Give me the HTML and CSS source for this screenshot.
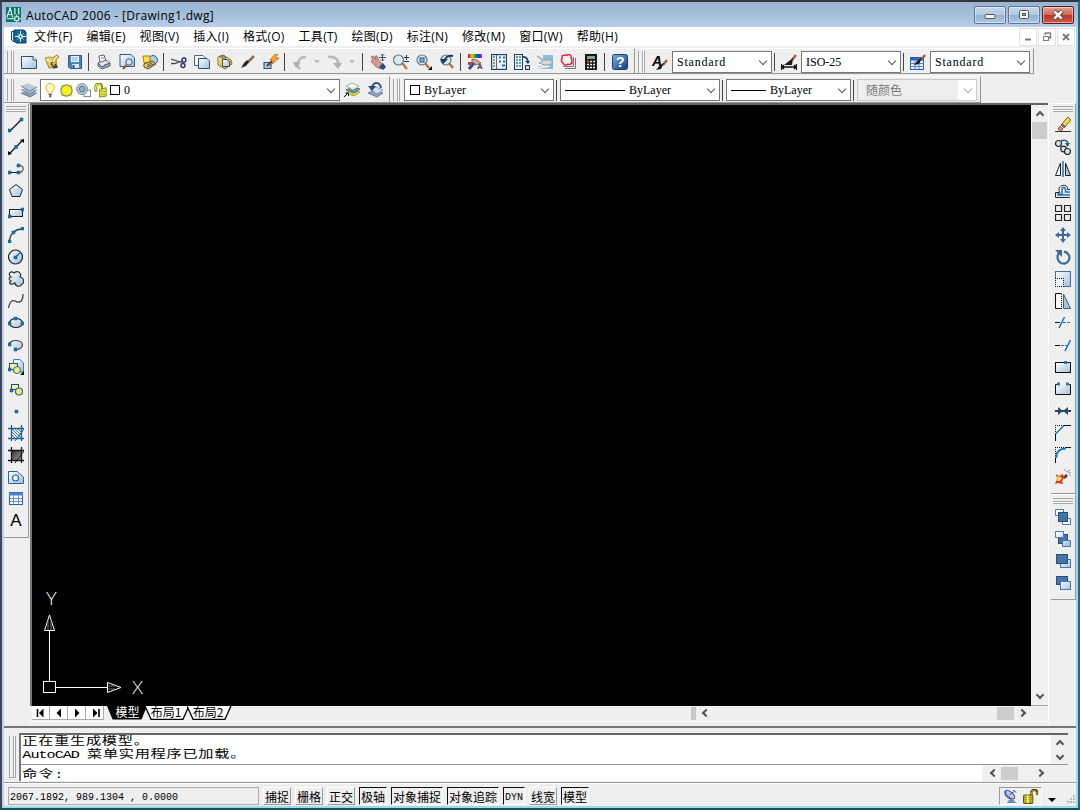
FILE: index.html
```html
<!DOCTYPE html>
<html lang="zh-CN">

<head>
    <meta charset="UTF-8">
    <meta name="viewport" content="width=device-width, initial-scale=1.0">
    <title>AutoCAD 2006 - [Drawing1.dwg]</title>
    <link rel="stylesheet" href="styles.css">
</head>

<body>
    <!-- shared gradients -->
    <svg class="defs" width="0" height="0">
        <defs>
            <linearGradient id="g-paper" x1="0" y1="0" x2="1" y2="1"><stop offset="0" stop-color="#fff"/><stop offset="1" stop-color="#9fc0dd"/></linearGradient>
            <linearGradient id="g-blue" x1="0" y1="0" x2="1" y2="1"><stop offset="0" stop-color="#7fb0dc"/><stop offset="1" stop-color="#123f7c"/></linearGradient>
            <linearGradient id="g-gold" x1="0" y1="0" x2="1" y2="1"><stop offset="0" stop-color="#fff3a0"/><stop offset="1" stop-color="#c99512"/></linearGradient>
            <linearGradient id="g-dark" x1="0" y1="0" x2="1" y2="1"><stop offset="0" stop-color="#22264c"/><stop offset="1" stop-color="#b0ad70"/></linearGradient>
            <linearGradient id="g-rainbow"><stop offset="0" stop-color="#e00030"/><stop offset=".3" stop-color="#e8d000"/><stop offset=".5" stop-color="#10b030"/><stop offset=".75" stop-color="#1040e0"/><stop offset="1" stop-color="#e010d0"/></linearGradient>
        </defs>
    </svg>

    <div class="window">
        <div class="titlebar">
            <svg class="app-icon" viewBox="0 0 16 16"><rect width="16" height="16" fill="#0d7468"/><path d="M1 11L4.500 1L7 11M9.500 1V8M13.500 1V8M2.500 8H6" fill="none" stroke="#d5f3ec" stroke-width="1.300"/><path d="M1 12.500H16M11.500 8V16" stroke="#fff"/><rect x="9.500" y="10.500" width="4" height="4" fill="#0d7468" stroke="#fff"/></svg>
            <span class="title">AutoCAD 2006 - [Drawing1.dwg]</span>
            <div class="win-btn"><svg width="14" height="12" viewBox="0 0 14 12"><rect x="2" y="5.500" width="10" height="4" rx="1" fill="#f5f5f5" stroke="#51565f"/></svg></div>
            <div class="win-btn"><svg width="14" height="12" viewBox="0 0 14 12"><rect x="2.500" y="1.500" width="9" height="8" rx="1" fill="#f5f5f5" stroke="#51565f"/><rect x="5.500" y="4.500" width="3" height="2" fill="#8fa9c6" stroke="#51565f"/></svg></div>
            <div class="win-btn close"><svg width="14" height="12" viewBox="0 0 14 12"><path d="M3 2L11 10M11 2L3 10" stroke="#5a4248" stroke-width="4.200"/><path d="M3.300 2.300L10.700 9.700M10.700 2.300L3.300 9.700" stroke="#fff" stroke-width="2.400"/></svg></div>
        </div>

        <div class="menubar">
            <svg class="menu-icon" viewBox="0 0 16 16"><path d="M.5 2.500H3V12.500H2L.5 11Z" fill="#d7e8f4" stroke="#174f7c"/><path d="M3 1H13L15 3V14H5L3 12Z" fill="#10639d" stroke="#0b3f68"/><path d="M9.500 2V13M4 7.500H15" stroke="#fff"/><path d="M6 4L13 11M13 4L6 11" stroke="#8cc4e8" stroke-width=".6"/><rect x="8" y="6" width="3" height="3" fill="#10639d" stroke="#fff"/></svg>
            <span class="menu">文件(F)</span>
            <span class="menu">编辑(E)</span>
            <span class="menu">视图(V)</span>
            <span class="menu">插入(I)</span>
            <span class="menu">格式(O)</span>
            <span class="menu">工具(T)</span>
            <span class="menu">绘图(D)</span>
            <span class="menu">标注(N)</span>
            <span class="menu">修改(M)</span>
            <span class="menu">窗口(W)</span>
            <span class="menu">帮助(H)</span>
            <div class="doc-btns">
                <div class="doc-btn"><svg width="10" height="10" viewBox="0 0 10 10"><path d="M2 7.500H8" stroke="#777d86" stroke-width="2"/></svg></div>
                <div class="doc-btn"><svg width="10" height="10" viewBox="0 0 10 10"><path d="M3 1H9M3 1V3M8.500 1V6H7" fill="none" stroke="#777d86" stroke-width="1.500"/><rect x="1.500" y="4.500" width="5" height="4" fill="none" stroke="#777d86"/></svg></div>
                <div class="doc-btn"><svg width="10" height="10" viewBox="0 0 10 10"><path d="M2 2L8 8M8 2L2 8" stroke="#777d86" stroke-width="2"/></svg></div>
            </div>
        </div>

        <div class="toolrow">
            <div class="toolbar">
                <i class="grip"></i>
                <div class="btn"><svg viewBox="0 0 16 16"><path d="M.5 2.500H12L15.500 6V14.500H.5Z" fill="url(#g-paper)" stroke="#24527c"/><path d="M12 2.500V6H15.500" fill="#fff" stroke="#24527c"/></svg></div>
                <div class="btn"><svg viewBox="0 0 16 16"><path d="M1 4L6 3L8 4L13 1L15 3L12 6L13 13L5 14Z" fill="url(#g-gold)" stroke="#a8882e"/><path d="M3 6L9 8L13 2" fill="none" stroke="#fffbd0"/><path d="M9 8C6 9 7 12 12 13M9 14L13 13L11 10" fill="none" stroke="#2f3f4a" stroke-width="1.300"/></svg></div>
                <div class="btn"><svg viewBox="0 0 16 16"><path d="M1.500 1.500H14.500V14.500H3L1.500 13Z" fill="#4a83bd" stroke="#2c5c96"/><path d="M4 2H12V8H4Z" fill="#e8f2fa"/><path d="M5 4H11M5 6H11" stroke="#8aaacd"/><path d="M5 10H12V14H5Z" fill="#dfe8f0"/><path d="M6.500 11V14" stroke="#204c87" stroke-width="2"/></svg></div>
                <i class="sep"></i>
                <div class="btn"><svg viewBox="0 0 16 16"><path d="M4 8L3 2L8 1L10 7" fill="#fff" stroke="#5c5c7c"/><path d="M2 9L10 6L14 9L6 13Z" fill="#e3e5ee" stroke="#5c5c7c"/><path d="M2 9V12L6 15L14 12V9L6 13Z" fill="#a3abc3" stroke="#5c5c7c"/><path d="M5 4H8M8 11L12 10" stroke="#777"/></svg></div>
                <div class="btn"><svg viewBox="0 0 16 16"><path d="M1 .5H12L15.500 4V12.500H1Z" fill="url(#g-paper)" stroke="#2e5d88"/><circle cx="10" cy="8" r="3.200" fill="#cfe6f7" stroke="#44586e"/><path d="M7.500 11L4 15" stroke="#9a5531" stroke-width="2"/></svg></div>
                <div class="btn"><svg viewBox="0 0 16 16"><circle cx="11" cy="6" r="4.500" fill="#a8cbe8" stroke="#395f88"/><path d="M1 2H8V8L2 9Z" fill="#ffe03c" stroke="#a78010"/><path d="M2 10L10 7L14 10L6 15L2 13Z" fill="url(#g-gold)" stroke="#5a4c20"/><path d="M5 11L10 9M5 13L12 10" stroke="#4b5164"/></svg></div>
                <i class="sep"></i>
                <div class="btn"><svg viewBox="0 0 16 16"><path d="M0 5L11 8.500M0 9.500H4L11 7" fill="none" stroke="#444c56" stroke-width="1.300"/><circle cx="13" cy="6" r="2" fill="none" stroke="#2b2f70" stroke-width="1.400"/><circle cx="12" cy="11.500" r="2" fill="none" stroke="#2b2f70" stroke-width="1.400"/></svg></div>
                <div class="btn"><svg viewBox="0 0 16 16"><path d="M.5 1.500H9L11.500 4V11.500H.5Z" fill="#fff" stroke="#3a6a96"/><path d="M4.500 4.500H13L15.500 7V14.500H4.500Z" fill="url(#g-paper)" stroke="#24527c"/></svg></div>
                <div class="btn"><svg viewBox="0 0 16 16"><path d="M1 3L6 1L14 6L15 10L8 15L1 11Z" fill="url(#g-gold)" stroke="#94700e"/><path d="M3 2H8L9 4H4Z" fill="#bbb" stroke="#666"/><path d="M5.500 5.500H10L12.500 8V12.500H5.500Z" fill="url(#g-paper)" stroke="#24527c"/></svg></div>
                <div class="btn"><svg viewBox="0 0 16 16"><path d="M14 2L7 9" stroke="#9b6b45" stroke-width="2.500"/><path d="M9 8L6 12L1 14L4 9L7 6Z" fill="#2b2725"/></svg></div>
                <div class="btn"><svg viewBox="0 0 16 16"><rect x="1" y="8.500" width="7" height="6" fill="#a9cbe7" stroke="#20507c"/><path d="M4 12L9 7" stroke="#6b3a20" stroke-width="2"/><path d="M12 0L7 6H11L8 11L16 4H12L15 0Z" fill="#f7b51b" stroke="#b9601a" stroke-width=".8"/></svg></div>
                <i class="sep"></i>
                <div class="btn"><svg viewBox="0 0 16 16"><path d="M8 15C3 11 6 3 14 3" fill="none" stroke="#b9b9b9" stroke-width="2.600"/><path d="M1 8H9L4 14Z" fill="#b0b0b0"/></svg></div>
                <i class="drop"></i>
                <div class="btn"><svg viewBox="0 0 16 16"><path d="M1 3C9 2 12 6 11 12" fill="none" stroke="#b9b9b9" stroke-width="2.600"/><path d="M6 9H15L11 15Z" fill="#b0b0b0"/></svg></div>
                <i class="drop"></i>
                <i class="sep wide"></i>
                <div class="btn"><svg viewBox="0 0 16 16"><path d="M1 7L3 6L1 3L3 2L6 6L5 2L7 2L9 7L12 9L13 12L10 15L5 12Z" fill="#d99a94" stroke="#9d6060" stroke-width=".8"/><path d="M9 13L13 9L16 13L13 16Z" fill="#284b80"/><path d="M12.500 0V7M9 3.500H16M11 1.500L12.500 0L14 1.500M11 5.500L12.500 7L14 5.500" fill="none" stroke="#245a80"/></svg></div>
                <div class="btn"><svg viewBox="0 0 16 16"><circle cx="5.500" cy="6" r="5" fill="#dbeaf5" stroke="#65788b" stroke-width="1.200"/><path d="M9 9L14 15" stroke="#b37b43" stroke-width="2.600"/><path d="M11 3.500H16M13.500 1V6M11 7.500H16" stroke="#173d6c"/></svg></div>
                <div class="btn"><svg viewBox="0 0 16 16"><circle cx="6" cy="6" r="5" fill="#dbeaf5" stroke="#65788b" stroke-width="1.200"/><rect x="4" y="4" width="4" height="4" fill="#85b4d7" stroke="#24527c"/><path d="M9 9L13 14" stroke="#b37b43" stroke-width="2.600"/><path d="M16 12V16H12Z"/></svg></div>
                <div class="btn"><svg viewBox="0 0 16 16"><circle cx="7" cy="6" r="5" fill="#dbeaf5" stroke="#65788b" stroke-width="1.200"/><path d="M10 9L14 14" stroke="#b37b43" stroke-width="2.600"/><path d="M14 2C9 1 6 4 5 7" fill="none" stroke="#17396b" stroke-width="2"/><path d="M1 5H9L4 10Z" fill="#17396b"/></svg></div>
                <i class="sep"></i>
                <div class="btn"><svg viewBox="0 0 16 16"><rect width="14" height="4" fill="url(#g-rainbow)"/><path d="M4 5L9 6L13 9L8 11L4 9Z" fill="#dba69b" stroke="#68423e" stroke-width=".7"/><path d="M1 15L6 9" stroke="#2354a0" stroke-width="3"/><text x="9" y="15" class="tiny">A</text><rect y="8" width="4" height="3" fill="#cf3e34"/></svg></div>
                <div class="btn"><svg viewBox="0 0 16 16"><rect x=".5" y=".5" width="15" height="15" fill="#eaf3fb" stroke="#163f70" stroke-width="1.300"/><path d="M5.500 1V15" stroke="#426f9b"/><path d="M3 2V14" stroke="#a19a48" stroke-width="2" stroke-dasharray="2 1"/><path d="M8 3.500H10M12 3.500H14M8 7.500H10M12 7.500H14M11 11.500H14" stroke="#41698f" stroke-width="2"/></svg></div>
                <div class="btn"><svg viewBox="0 0 16 16"><rect x=".5" y=".5" width="8" height="15" fill="#eaf3fb" stroke="#163f70"/><path d="M2 3H7M2 6H7M2 9H7M2 12H7" stroke="#426f9b" stroke-width="1.500" stroke-dasharray="2 1"/><path d="M8 3C12 2 14 5 14 9" fill="none" stroke="#163f70" stroke-width="1.700"/><path d="M11 7H16L14 10Z" fill="#163f70"/><rect x="11.500" y="11.500" width="4" height="4" fill="#e6dc90" stroke="#163f70"/></svg></div>
                <div class="btn"><svg viewBox="0 0 16 16"><path d="M6 1H16V15H1V12H6Z" fill="#8dbbd8"/><path d="M0 2L7 6H15V10L8 11L2 9L6 7Z" fill="#d5d9dc" stroke="#8b989f" stroke-width=".8"/><path d="M1 14L12 12" stroke="#e9edf0" stroke-width="2"/></svg></div>
                <div class="btn"><svg viewBox="0 0 16 16"><path d="M5 14.500H15.500V4M3 12.500H13.500V3" fill="none" stroke="#70767c"/><path d="M2 2C4 0 5 2 7 1C9 0 12 1 11 4C13 6 11 7 12 9C10 12 8 9 6 11C3 12 4 9 2 8C0 6 3 5 2 2Z" fill="#fff2f2" stroke="#e1182b" stroke-width="1.400"/></svg></div>
                <div class="btn"><svg viewBox="0 0 16 16"><rect x="2" width="12" height="16" fill="#19191b"/><rect x="4" y="2" width="8" height="3" fill="#84a784"/><path d="M4 7.500H12M4 10.500H12M4 13.500H12" stroke="#f2f2f2" stroke-width="1.600" stroke-dasharray="2 1"/><path d="M4 7.500H6" stroke="#e03030" stroke-width="2"/></svg></div>
                <i class="sep"></i>
                <div class="btn"><svg viewBox="0 0 16 16"><rect x=".5" y=".5" width="15" height="15" rx="2" fill="url(#g-blue)" stroke="#123f7c"/><text x="4" y="13" class="help">?</text></svg></div>
            </div>
            <div class="toolbar styles">
                <i class="grip"></i>
                <div class="btn style-btn"><svg viewBox="0 0 16 16"><text x="0" y="12" class="slant">A</text><path d="M15 6L11 11" stroke="#a76335" stroke-width="2.500"/><path d="M12 9L9 15L4 16L8 11Z" fill="#1b1b1b"/></svg></div>
                <div class="combo w100 spaced">Standard<i class="chev"></i></div>
                <i class="sep style-sep"></i>
                <div class="btn style-btn"><svg viewBox="0 0 16 16"><path d="M.5 10V16M15.500 10V16M1 13H15M3 11L1 13L3 15M13 11L15 13L13 15" fill="none" stroke="#111" stroke-width="1.300"/><path d="M15 1L11 6" stroke="#a76335" stroke-width="2.500"/><path d="M12 4L11 11L3 11L8 7Z" fill="#1b1b1b"/></svg></div>
                <div class="combo w100">ISO-25<i class="chev"></i></div>
                <i class="sep style-sep"></i>
                <div class="btn style-btn"><svg viewBox="0 0 16 16"><rect x=".5" y="3.500" width="13" height="12" fill="#e4f0ff" stroke="#2c5eaf"/><path d="M0 5H14" stroke="#2c5eaf" stroke-width="3"/><path d="M5 4V15M9 4V15M0 9.500H14M0 12.500H14" stroke="#4d83cf"/><path d="M15 1L11 6" stroke="#a76335" stroke-width="2.500"/><path d="M12 4L9 10L4 11L8 6Z" fill="#1b1b1b"/></svg></div>
                <div class="combo w100 spaced">Standard<i class="chev"></i></div>
            </div>
        </div>

        <div class="toolrow second">
            <div class="toolbar">
                <i class="grip"></i>
                <div class="btn"><svg viewBox="0 0 16 16"><path d="M0 11L7 8L16 11L9 15Z" fill="#8c9fb3"/><path d="M0 7.500L7 4.500L16 8L9 12Z" fill="#a3b6c8" stroke="#eef2f5" stroke-width=".6"/><path d="M0 4L7 1L16 5L9 9Z" fill="#b9c8d6" stroke="#eef2f5" stroke-width=".6"/><path d="M0 4L9 9L16 5M0 7.500L9 12L16 8M0 11L9 15L16 11" fill="none" stroke="#536c85" stroke-width=".8"/></svg></div>
                <div class="combo layer">
                    <svg viewBox="0 0 16 16"><path d="M6 11C6 9 3 8 3 5C3 -1 12 -1 12 5C12 8 9 9 9 11Z" fill="#fffbb5" stroke="#c4ae3c"/><path d="M6 12.500H9.500M6.500 14.500H9" stroke="#4f5f82" stroke-width="1.600"/></svg>
                    <svg viewBox="0 0 16 16"><path d="M2 2L14 14M14 2L2 14" stroke="#d8cf40" stroke-width="1.500"/><circle cx="8" cy="8" r="6" fill="#f7ef27" stroke="#7f8b4c" stroke-width="1.200"/></svg>
                    <svg viewBox="0 0 16 16"><rect x="8.500" y="7.500" width="7" height="7" fill="#fff" stroke="#66819b"/><circle cx="6.500" cy="6.500" r="5.800" fill="#b6c6d5" stroke="#73899e"/><circle cx="6.500" cy="6.500" r="3" fill="#92adc6" stroke="#587590"/></svg>
                    <svg viewBox="0 0 16 16"><path d="M3 9V4C3 0 9 0 9 4V8" fill="none" stroke="#8b8d20" stroke-width="3.300"/><path d="M3 8V4C3 1 8 1 8 4V7" fill="none" stroke="#f0ed4a" stroke-width="1.500"/><path d="M7 7L14 5V14L7 15Z" fill="#e4ea3c" stroke="#83861f"/><path d="M8 9H13M8 12H13" stroke="#a4a81f"/></svg>
                    <i class="swatch"></i>
                    <span>0</span><i class="chev"></i>
                </div>
                <div class="btn"><svg viewBox="0 0 16 16"><path d="M2 11L8 8L16 10L10 14Z" fill="#e2d63e" stroke="#8c851c" stroke-width=".7"/><path d="M2 8L8 5L16 7L10 11Z" fill="#5f91b6" stroke="#2e5979" stroke-width=".7"/><path d="M2 4L8 1L15 4L9 8Z" fill="#f5f6e8" stroke="#9b9c68" stroke-width=".7"/><path d="M0 15L4 11M1.500 11H4.500V14" fill="none" stroke="#111"/></svg></div>
                <div class="btn"><svg viewBox="0 0 16 16"><path d="M1 11L7 8L16 11L10 15Z" fill="#8ea6bd" stroke="#3f5e7b" stroke-width=".7"/><path d="M3 7L9 5L16 8L10 12Z" fill="#d5dee6" stroke="#64819c" stroke-width=".7"/><path d="M14 6C13 0 7 -1 5 5" fill="none" stroke="#315b8d" stroke-width="2"/><path d="M1 4H9L5 9Z" fill="#234a7c"/></svg></div>
            </div>
            <div class="toolbar props">
                <i class="grip"></i>
                <div class="combo w150"><i class="swatch"></i>ByLayer<i class="chev"></i></div>
                <i class="sep prop-sep"></i>
                <div class="combo w160"><i class="line long"></i>ByLayer<i class="chev"></i></div>
                <i class="sep prop-sep"></i>
                <div class="combo w125"><i class="line"></i>ByLayer<i class="chev"></i></div>
                <i class="sep prop-sep"></i>
                <div class="combo w120 disabled"><span>随颜色</span><i class="chev"></i></div>
            </div>
        </div>

        <div class="main">
            <div class="side left">
                <i class="hgrip"></i>
                <div class="tool"><svg viewBox="0 0 16 16"><path d="M2 14L14 2" stroke="#111" stroke-width="1.200"/><path class="node" d="M0 12H3V15H0ZM12 1H15V4H12Z"/></svg></div>
                <div class="tool"><svg viewBox="0 0 16 16"><path d="M1 15L15 1" stroke="#111" stroke-width="1.200"/><path d="M0 16V12L4 15ZM16 0V4L12 1Z"/><path class="node" d="M6.500 6.500H9.500V9.500H6.500Z"/></svg></div>
                <div class="tool"><svg viewBox="0 0 16 16"><path d="M1 11.500H11" stroke="#111"/><path d="M11 4.500C17 4 16 12 11 11.500" fill="none" stroke="#555" stroke-width="1.200"/><path class="node" d="M0 10H3V13H0ZM9 10H12V13H9ZM9 3H12V6H9Z"/></svg></div>
                <div class="tool"><svg viewBox="0 0 16 16"><path d="M8 1.500L14.500 6.500L12 13.500H4L1.500 6.500Z" fill="url(#g-paper)" stroke="#222"/></svg></div>
                <div class="tool"><svg viewBox="0 0 16 16"><rect x="1.500" y="4.500" width="13" height="7" fill="url(#g-paper)" stroke="#222"/><path class="node" d="M0 10H3V13H0ZM13 3H16V6H13Z"/></svg></div>
                <div class="tool"><svg viewBox="0 0 16 16"><path d="M1.500 14C2 6 8 2 14 2" fill="none" stroke="#444" stroke-width="1.300"/><path class="node" d="M0 13H3V16H0ZM4 4H7V7H4ZM13 0H16V3H13Z"/></svg></div>
                <div class="tool"><svg viewBox="0 0 16 16"><circle cx="7.500" cy="8" r="7" fill="url(#g-paper)" stroke="#222" stroke-width="1.200"/><path d="M7.500 8L12 4" stroke="#0c63a8" stroke-width="1.300"/><path class="node" d="M6 7H9V10H6Z"/></svg></div>
                <div class="tool"><svg viewBox="0 0 16 16"><path d="M3 6C-1 3 3 -1 6 2C10 -1 14 2 12 6C17 7 16 13 14 13C12 17 7 15 7 12C2 15 0 11 3 10C0 8 1 6 3 6Z" fill="url(#g-paper)" stroke="#333" stroke-width="1.200"/></svg></div>
                <div class="tool"><svg viewBox="0 0 16 16"><path d="M.5 15C2 7 5 7 7 8C12 11 15 8 15 1" fill="none" stroke="#333" stroke-width="1.200"/></svg></div>
                <div class="tool"><svg viewBox="0 0 16 16"><ellipse cx="8" cy="8" rx="6.500" ry="4.500" fill="url(#g-paper)" stroke="#222" stroke-width="1.200"/><path class="node" d="M0 7H3V10H0ZM13 7H16V10H13ZM6 2H9V5H6Z"/></svg></div>
                <div class="tool"><svg viewBox="0 0 16 16"><path d="M1.500 8C1 2 14 2 14.500 8C14 11 12 12.500 8 12.500" fill="url(#g-paper)" stroke="#444" stroke-width="1.200"/><path class="node" d="M0 6H3V9H0ZM6 11H9V14H6Z"/></svg></div>
                <div class="tool"><svg viewBox="0 0 16 16"><path d="M5.500 .5H12L15.500 4V13H5.500Z" fill="url(#g-paper)" stroke="#4a7ba8"/><rect x="1.500" y="4.500" width="8" height="6" fill="#f3f2a6" stroke="#155279"/><circle cx="9" cy="11" r="3.500" fill="#e8e994" stroke="#3a6c57"/><path class="node" d="M0 9H3V12H0Z"/><path d="M16 12V16H12Z"/></svg></div>
                <div class="tool"><svg viewBox="0 0 16 16"><rect x="3.500" y="3.500" width="7" height="5" fill="#f3f2a6" stroke="#155279"/><circle cx="11" cy="10.500" r="3.500" fill="#e8e994" stroke="#3a6c57" stroke-width="1.200"/><path class="node" d="M2 8H5V11H2Z"/></svg></div>
                <div class="tool"><svg viewBox="0 0 16 16"><path class="node" d="M7 7H10V10H7Z"/></svg></div>
                <div class="tool"><svg viewBox="0 0 16 16"><path d="M4 4L13 13M7 4L13 10M10 4L13 7M4 7L10 13M4 10L7 13" stroke="#526e84"/><path d="M3.500 0V16M13.500 0V16M0 3.500H16M0 13.500H16" stroke="#17639b" stroke-width="1.300"/><path d="M16 4L7 16" stroke="#17639b"/></svg></div>
                <div class="tool"><svg viewBox="0 0 16 16"><rect x="3" y="3" width="11" height="11" fill="url(#g-dark)"/><path d="M3.500 0V16M13.500 0V16M0 3.500H16M0 13.500H16" stroke="#161821" stroke-width="1.300"/><path d="M16 4L7 16" stroke="#161821"/></svg></div>
                <div class="tool"><svg viewBox="0 0 16 16"><path d="M.5 2.500H9L15.500 8V14.500H.5Z" fill="url(#g-paper)" stroke="#24659d"/><circle cx="7.500" cy="9" r="3" fill="#fff" stroke="#24659d" stroke-width="1.200"/></svg></div>
                <div class="tool"><svg viewBox="0 0 16 16"><rect x="1.500" y="1.500" width="13" height="12" fill="#f7fbff" stroke="#315ba4"/><path d="M1 3H15" stroke="#5080cd" stroke-width="3"/><path d="M5.500 4V13M10.500 4V13M2 7.500H14M2 10.500H14" stroke="#6a93cd"/></svg></div>
                <div class="tool mtext">A</div>
            </div>

            <div class="view">
                <div class="view-top">
                    <div class="canvas">
                        <svg width="120" height="120" viewBox="0 0 120 120">
                            <g fill="none" stroke="#fff">
                                <rect x="11.500" y="95.500" width="12" height="11"/>
                                <path d="M17.500 95V44M24 101.500H75"/>
                                <path d="M17.500 29L12.500 44.500H22.500ZM89 101.500L75.500 96.500V106.500Z"/>
                                <path d="M16 35V44M19 35V44M76 100H83M76 103H83" stroke="#777"/>
                            </g>
                            <text x="14" y="18.500" class="axis">Y</text>
                            <text x="100" y="108" class="axis">X</text>
                        </svg>
                    </div>
                    <div class="vscroll"><i class="arr up"></i><i class="thumb"></i><i class="arr down"></i></div>
                </div>
                <div class="tabs">
                    <div class="nav"><svg width="12" height="10" viewBox="0 0 12 10"><path d="M2.500 1V9" stroke="#000" stroke-width="1.600"/><path d="M8.500 .5V9.500L4 5Z"/></svg></div>
                    <div class="nav"><svg width="12" height="10" viewBox="0 0 12 10"><path d="M8 .5V9.500L3.500 5Z"/></svg></div>
                    <div class="nav"><svg width="12" height="10" viewBox="0 0 12 10"><path d="M4 .5V9.500L8.500 5Z"/></svg></div>
                    <div class="nav"><svg width="12" height="10" viewBox="0 0 12 10"><path d="M4 .5V9.500L8.500 5Z"/><path d="M10 1V9" stroke="#000" stroke-width="1.600"/></svg></div>
                    <div class="tab active"><svg viewBox="0 0 44 14" preserveAspectRatio="none"><path d="M0 0L6 13.500H37L43 0Z"/></svg><span>模型</span></div>
                    <div class="tab"><svg viewBox="0 0 44 14" preserveAspectRatio="none"><path d="M0 0L6 13.500H37L43 0" fill="#fff" stroke="#000" stroke-width="1.300"/></svg><span>布局1</span></div>
                    <div class="tab"><svg viewBox="0 0 44 14" preserveAspectRatio="none"><path d="M0 0L6 13.500H37L43 0" fill="#fff" stroke="#000" stroke-width="1.300"/></svg><span>布局2</span></div>
                    <div class="hscroll"><i class="split"></i><i class="arr lt"></i><i class="thumb"></i><i class="arr rt"></i></div>
                </div>
            </div>

            <div class="right">
                <div class="side">
                    <i class="hgrip"></i>
                    <div class="tool"><svg viewBox="0 0 16 16"><path d="M0 14.500H16" stroke="#333"/><path d="M13 0L16 3L9 11L6 8Z" fill="#f5d548" stroke="#5d4720" stroke-width=".8"/><path d="M5 9L8 12L6 14L3 12Z" fill="#df8e84" stroke="#783f39" stroke-width=".8"/><path d="M7 7L10 10" stroke="#557" stroke-width="1.500"/></svg></div>
                    <div class="tool"><svg viewBox="0 0 16 16"><circle cx="3.500" cy="4.500" r="3" fill="#d9e3eb" stroke="#222" stroke-width="1.200"/><circle cx="8.500" cy="10" r="2.800" fill="#d9e3eb" stroke="#222" stroke-width="1.200"/><circle cx="12.500" cy="12.500" r="3" fill="#d9e3eb" stroke="#222" stroke-width="1.200"/><path d="M6 2C10 0 13 2 13 5" fill="none" stroke="#175b91" stroke-width="1.500"/><path d="M10 4H15L12.500 8Z" fill="#175b91"/></svg></div>
                    <div class="tool"><svg viewBox="0 0 16 16"><path d="M5.500 2V14.500H.5Z" fill="#fff" stroke="#222"/><path d="M10.500 2V14.500H15.500Z" fill="#b7c5d2" stroke="#222"/><path d="M8 0V16" stroke="#1776bd" stroke-width="1.500"/></svg></div>
                    <div class="tool"><svg viewBox="0 0 16 16"><path d="M15 14.500H.5V9.500H4.500C1 1 14 0 12.500 6.500H15" fill="none" stroke="#222"/><path d="M15 12H3V11H7V6C7 4 10.500 4 10.500 6V9H15" fill="none" stroke="#1776bd" stroke-width="1.500"/></svg></div>
                    <div class="tool"><svg viewBox="0 0 16 16"><path d="M.5 .5H6.500V6.500H.5ZM9.500 .5H15.500V6.500H9.500ZM.5 9.500H6.500V15.500H.5ZM9.500 9.500H15.500V15.500H9.500Z" fill="#e9eef2" stroke="#222" stroke-width="1.200"/></svg></div>
                    <div class="tool"><svg viewBox="0 0 16 16"><path d="M8 2V14M2 8H14" stroke="#3b6b9d" stroke-width="2"/><path d="M8 0L11 4H5ZM8 16L11 12H5ZM0 8L4 5V11ZM16 8L12 5V11Z" fill="#3b6b9d"/></svg></div>
                    <div class="tool"><svg viewBox="0 0 16 16"><path d="M4 4C1 8 3 14 8 14.500C14 15 16 8 13 5C12 3 10 3 9 2.500" fill="none" stroke="#3b6b9d" stroke-width="2.200"/><path d="M0 1H7V8Z" fill="#3b6b9d"/></svg></div>
                    <div class="tool"><svg viewBox="0 0 16 16"><rect x=".5" y=".5" width="15" height="15" fill="url(#g-paper)" stroke="#416f99"/><rect y="7" width="9" height="9" fill="#eef3f8"/><path d="M0 7.500H9M8.500 7V16M.5 7V16M0 15.500H9" stroke="#111" stroke-dasharray="1 1"/></svg></div>
                    <div class="tool"><svg viewBox="0 0 16 16"><path d="M6.500 .5H.5V15.500H6.500" fill="#fff" stroke="#111"/><path d="M6.500 1V16" stroke="#111" stroke-dasharray="1 1"/><path d="M8.500 1L15.500 15.500H8.500Z" fill="#a9c3da" stroke="#385f86"/></svg></div>
                    <div class="tool"><svg viewBox="0 0 16 16"><path d="M0 7.500H5" stroke="#111"/><path d="M8 7.500H16" stroke="#1776bd" stroke-dasharray="3 1"/><path d="M9.500 2L4 13" stroke="#1776bd" stroke-width="1.500"/></svg></div>
                    <div class="tool"><svg viewBox="0 0 16 16"><path d="M0 8.500H5" stroke="#111"/><path d="M6 8.500H12" stroke="#1776bd" stroke-dasharray="3 1"/><path d="M15.500 3L10 14" stroke="#1776bd" stroke-width="1.500"/></svg></div>
                    <div class="tool"><svg viewBox="0 0 16 16"><rect x=".5" y="3.500" width="15" height="10" fill="url(#g-paper)" stroke="#111"/><path d="M9 2H12V5H9Z" fill="#40719e"/></svg></div>
                    <div class="tool"><svg viewBox="0 0 16 16"><path d="M3 3.500H.5V13.500H15.500V3.500H13" fill="url(#g-paper)" stroke="#111"/><path d="M2 1.500H5V4.500H2ZM11 1.500H14V4.500H11Z" fill="#40719e"/></svg></div>
                    <div class="tool"><svg viewBox="0 0 16 16"><path d="M0 8H16" stroke="#111" stroke-width="1.600"/><path d="M3 4L8 8L3 12ZM13 4L8 8L13 12Z" fill="#274c77"/></svg></div>
                    <div class="tool"><svg viewBox="0 0 16 16"><path d="M0 .5H9M.5 0V9" stroke="#111" stroke-dasharray="1 1"/><path d="M9 .5H16M.5 9V16" stroke="#111"/><path d="M.5 9L9 .5" stroke="#1776bd" stroke-width="1.400"/></svg></div>
                    <div class="tool"><svg viewBox="0 0 16 16"><path d="M0 .5H9M.5 0V9" stroke="#111" stroke-dasharray="1 1"/><path d="M10 .5H16M.5 11V16" stroke="#111"/><path d="M1 11C1 5 5 1.500 11 1.500" fill="none" stroke="#1776bd" stroke-width="2"/></svg></div>
                    <div class="tool"><svg viewBox="0 0 16 16"><path d="M1 5L4 7L8 5L9 9L7 12L8 15L3 14L0 15L2 10Z" fill="#d83918"/><path d="M2 7L6 8L5 12L2 12Z" fill="#f8d33b"/><path d="M4 11L7 9" stroke="#fff"/><path d="M8 8L11 5L13 7L10 10Z" fill="#4a4450"/><path d="M11 3L15 1M14 5L16 7M10 2V0M13 3L16 4" stroke="#9c9c9c"/></svg></div>
                </div>
                <div class="side order">
                    <i class="hgrip"></i>
                    <div class="tool"><svg viewBox="0 0 16 16"><path d="M.5 .5H8.500V6.500H.5ZM7.500 9.500H15.500V15.500H7.500Z" fill="#fff" stroke="#4779aa"/><rect x="3.500" y="3.500" width="9" height="9" fill="#4674a5" stroke="#274f80"/></svg></div>
                    <div class="tool"><svg viewBox="0 0 16 16"><rect x="3.500" y="3.500" width="9" height="9" fill="#4674a5" stroke="#274f80"/><path d="M.5 .5H8.500V6.500H.5ZM7.500 9.500H15.500V15.500H7.500Z" fill="url(#g-paper)" stroke="#4779aa"/></svg></div>
                    <div class="tool"><svg viewBox="0 0 16 16"><rect x="5.500" y="6.500" width="10" height="8" fill="url(#g-paper)" stroke="#4779aa"/><rect x="1.500" y="1.500" width="11" height="9" fill="#4674a5" stroke="#274f80"/></svg></div>
                    <div class="tool"><svg viewBox="0 0 16 16"><rect x="1.500" y="1.500" width="11" height="8" fill="#4674a5" stroke="#274f80"/><rect x="5.500" y="6.500" width="10" height="8" fill="url(#g-paper)" stroke="#4779aa"/></svg></div>
                </div>
            </div>
        </div>

        <div class="command">
            <i class="grip"></i>
            <div class="cmd-box">
                <div class="history">
                    <div class="lines">
                        <div class="cmd-line">正在重生成模型。</div>
                        <div class="cmd-line"><span class="latin">AutoCAD </span>菜单实用程序已加载。</div>
                    </div>
                    <div class="cmd-vscroll"><i class="arr up"></i><i class="arr down"></i></div>
                </div>
                <div class="prompt">
                    <div class="cmd-line">命令<span class="latin">:</span></div>
                    <div class="cmd-hscroll"><i class="arr lt"></i><i class="thumb"></i><i class="arr rt"></i></div>
                </div>
            </div>
        </div>

        <div class="status">
            <div class="coords">2067.1892, 989.1304 , 0.0000</div>
            <div class="toggle">捕捉</div>
            <div class="toggle">栅格</div>
            <div class="toggle">正交</div>
            <div class="toggle on">极轴</div>
            <div class="toggle on">对象捕捉</div>
            <div class="toggle on">对象追踪</div>
            <div class="toggle on dyn">DYN</div>
            <div class="toggle">线宽</div>
            <div class="toggle on">模型</div>
            <div class="tray">
                <svg viewBox="0 0 16 16"><path d="M2 2C1 8 6 12 12 10Z" fill="#9eb5df" stroke="#36508c"/><ellipse cx="7.500" cy="6" rx="6" ry="2.800" transform="rotate(42 7.500 6)" fill="#b9cbec" stroke="#36508c"/><path d="M7 6L13 2M11 1L14 4" stroke="#36508c"/><path d="M7 11L4 15H14L10 10Z" fill="#7088bb"/></svg>
                <svg viewBox="0 0 16 16"><path d="M9 7V4C9 0 15 0 15 4V6" fill="none" stroke="#4b4205" stroke-width="2.600"/><path d="M9.300 7V4C9 1 14.500 1 14.800 5" fill="none" stroke="#e3d230"/><rect x=".5" y="6.500" width="10" height="9" rx="1" fill="#d9cb1b" stroke="#4b4205"/><path d="M1 9H10M1 11.500H10M1 14H10" stroke="#827808"/><path d="M5 7V15" stroke="#fff78a" stroke-width="2"/></svg>
            </div>
            <i class="tray-drop"></i>
            <svg class="resize" viewBox="0 0 10 10"><path d="M7 0H9V2H7ZM4 3H6V5H4ZM7 3H9V5H7ZM1 6H3V8H1ZM4 6H6V8H4ZM7 6H9V8H7Z" fill="#b8b8b8"/></svg>
        </div>
    </div>
</body>

</html>
```
FILE: styles.css
```css
* {
    box-sizing: border-box;
}

body {
    margin: 0;
    overflow: hidden;
    font-family: "Open Sans", "Noto Sans CJK SC", sans-serif;
    font-size: 12px;
    color: #000;
}

svg {
    display: block;
    flex: none;
}

i {
    display: block;
    flex: none;
}

.defs {
    position: absolute;
}

.window {
    display: flex;
    flex-direction: column;
    width: 1080px;
    height: 810px;
    padding: 0 2px 1px 2px;
    background: #efefef;
    border-top: 2px solid #34343e;
    border-left: 2px solid #3f4756;
    border-right: 2px solid #1b6d80;
    border-bottom: 2px solid #07575d;
    box-shadow: inset 2px 0 #b9d1ea, inset -2px 0 #a9d3ec, inset 0 -2px #a8d4e8;
}

/* title */
.titlebar {
    display: flex;
    flex: none;
    height: 25px;
    margin: 0 -2px;
    padding: 0 4px 0 4px;
    background: linear-gradient(#9ab4d0, #a4bfdc 50%, #b7cee9);
}

.app-icon {
    width: 15px;
    height: 15px;
    margin: 5px 5px 0 0;
}

.title {
    flex: 1;
    line-height: 27px;
    font-size: 12px;
    letter-spacing: 0.33px;
}

.win-btn {
    display: flex;
    justify-content: center;
    align-items: center;
    width: 32px;
    height: 18px;
    margin: 4px 2px 0 0;
    border: 1px solid #60758f;
    border-radius: 2px;
    background: linear-gradient(#c5d7ea, #b3cae3 48%, #95b1cf 52%, #b0cae5);
    box-shadow: inset 0 0 0 1px rgba(255, 255, 255, .45);
}

.win-btn.close {
    margin-right: 0;
    border-color: #571d20;
    background: linear-gradient(#e2a291, #cf6a58 48%, #b93524 52%, #cf5b44);
}

/* menu */
.menubar {
    display: flex;
    flex: none;
    height: 19px;
    padding-left: 7px;
    background: #fff;
}

.menu-icon {
    width: 16px;
    height: 16px;
    margin: 2px 7px 0 0;
}

.menu {
    margin-right: 13.9px;
    line-height: 19px;
    letter-spacing: 0.28px;
    white-space: nowrap;
}

.doc-btns {
    display: flex;
    gap: 1px;
    margin-left: auto;
    padding: 1px 1px 0 0;
}

.doc-btn {
    display: flex;
    justify-content: center;
    align-items: center;
    width: 18px;
    height: 18px;
    border: 1px solid #e2e2e2;
}

/* horizontal toolbars */
.toolrow {
    display: flex;
    flex: none;
    height: 26px;
    margin-top: 2px;
}

.toolrow.second {
    height: 27px;
}

.toolbar {
    display: flex;
    align-items: center;
    padding: 1px 3px 0 3px;
    border-top: 1px solid #fff;
    border-right: 1px solid #949494;
    border-bottom: 1px solid #949494;
}

.grip {
    width: 7px;
    height: 22px;
    margin-right: 3px;
    border-left: 1px solid #a5a5a5;
    border-right: 1px solid #a5a5a5;
    background: linear-gradient(90deg, #f1f1f1 3px, #a5a5a5 3px, #a5a5a5 4px, #fff 4px);
}

.btn {
    display: flex;
    flex: none;
    justify-content: center;
    width: 23px;
}

.btn svg,
.tool svg {
    width: 16px;
    height: 16px;
}

.sep {
    width: 1px;
    height: 18px;
    margin: 0 3px 0 2px;
    background: #444;
}

.sep.wide {
    margin: 0 3px 0 4px;
}

.drop {
    width: 12px;
    height: 4px;
    background: #b8b8b8;
    clip-path: polygon(25% 20%, 75% 20%, 50% 100%);
}

.styles .grip {
    margin-right: 2px;
}

.style-btn {
    width: 25px;
}

.sep.style-sep {
    margin: 0 1px 0 2px;
}

.combo {
    display: flex;
    flex: none;
    align-items: center;
    height: 22px;
    padding: 0 4px;
    border: 1px solid #777;
    background: #fff;
    font-family: "Liberation Serif", serif;
    font-size: 12px;
    line-height: 20px;
    white-space: nowrap;
}

.spaced {
    letter-spacing: 0.8px;
}

.combo .chev {
    margin-left: auto;
}

.chev {
    width: 6px;
    height: 6px;
    margin-right: 1px;
    border-right: 1px solid #555;
    border-bottom: 1px solid #555;
    transform: translateY(-1px) rotate(45deg);
}

.w100 {
    width: 100px;
}

.w120 {
    width: 120px;
}

.w125 {
    width: 125px;
}

.w150 {
    width: 150px;
}

.w160 {
    width: 160px;
}

.layer {
    width: 300px;
}

.layer svg {
    width: 15px;
    height: 15px;
    margin-right: 2px;
}

.layer svg:first-child {
    margin-left: -2px;
    margin-right: 1px;
}

.layer svg:nth-child(4) {
    margin-right: -1px;
}

.swatch {
    width: 10px;
    height: 10px;
    margin: 0 4px 0 1px;
    border: 1px solid #000;
}

.layer .swatch {
    margin: 0 4px 0 3px;
}

.line {
    width: 35px;
    height: 1px;
    margin-right: 4px;
    background: #000;
}

.line.long {
    width: 60px;
}

.props .grip {
    margin-right: 4px;
}

.sep.prop-sep {
    height: 21px;
    margin: 0 3px 0 2px;
}

.disabled {
    padding-left: 0;
    border-color: #c8c8c8;
    color: #777;
    font-family: "Noto Sans CJK SC", sans-serif;
    font-size: 12px;
}

.disabled span {
    width: 100px;
    padding-left: 8px;
    background: #eee;
}

.disabled .chev {
    border-color: #aaa;
}

.tiny {
    font: bold 8px "Liberation Sans", sans-serif;
    fill: #3a3a3a;
}

.help {
    font: bold 14px "Liberation Sans", sans-serif;
    fill: #fff;
}

.slant {
    font: italic bold 14px "Liberation Sans", sans-serif;
}

/* middle part */
.main {
    display: flex;
    flex: none;
    height: 619px;
}

.side {
    display: flex;
    flex: none;
    flex-direction: column;
    align-items: center;
    width: 25px;
    height: 435px;
    padding-top: 2px;
    border-top: 1px solid #fff;
    border-right: 1px solid #999;
    border-bottom: 1px solid #999;
}

.hgrip {
    width: 20px;
    height: 6px;
    margin-bottom: 2px;
    border-top: 1px solid #a5a5a5;
    border-bottom: 1px solid #a5a5a5;
    background: linear-gradient(#efefef 2px, #a5a5a5 2px, #a5a5a5 3px, #fff 3px);
}

.tool {
    display: flex;
    flex: none;
    align-items: center;
    justify-content: center;
    width: 22px;
    height: 22px;
}

.mtext {
    font: 17px/22px "Liberation Sans", sans-serif;
}

.node {
    fill: #1878b8;
    stroke: #0e4d80;
    stroke-width: .5;
}

.view {
    width: 1019px;
    margin-left: 1px;
    border-right: 1px solid #fff;
    border-bottom: 1px solid #fff;
}

.view-top {
    display: flex;
    height: 603px;
    border-top: 2px solid #666;
    border-left: 2px solid #777;
}

.canvas {
    display: flex;
    align-items: flex-end;
    width: 999px;
    background: #000;
}

.axis {
    font: 300 18px Lato, "Liberation Sans", sans-serif;
    fill: #fff;
}

.vscroll {
    display: flex;
    flex-direction: column;
    align-items: center;
    width: 17px;
    background: #f0f0f0;
    border-bottom: 1px solid #aaa;
}

.thumb {
    background: #cdcdcd;
}

.vscroll .thumb {
    width: 15px;
    height: 17px;
    margin-top: 4px;
}

.arr {
    width: 6px;
    height: 6px;
    border-top: 2px solid #555;
    border-left: 2px solid #555;
}

.up {
    transform: rotate(45deg);
}

.down {
    transform: rotate(225deg);
}

.lt {
    transform: rotate(-45deg);
}

.rt {
    transform: rotate(135deg);
}

.vscroll .up {
    margin-top: 7px;
}

.vscroll .down {
    margin-top: auto;
    margin-bottom: 7px;
}

.tabs {
    display: flex;
    height: 14px;
    padding-left: 2px;
}

.nav {
    display: flex;
    justify-content: center;
    align-items: center;
    width: 18px;
    height: 14px;
    border-right: 1px solid #aaa;
    border-bottom: 1px solid #aaa;
    background: #fff;
}

.tab {
    display: grid;
    width: 45px;
    height: 14px;
    margin-right: -3px;
}

.tab:nth-child(5) {
    width: 41px;
    margin-left: 3px;
}

.tab svg,
.tab span {
    grid-area: 1 / 1;
}

.tab svg {
    width: 100%;
    height: 14px;
}

.tab span {
    z-index: 1;
    font-family: "Noto Sans CJK SC", sans-serif;
    line-height: 12px;
    text-align: center;
    white-space: nowrap;
}

.tab:nth-child(n+6) span {
    margin-left: -3px;
}

.active {
    color: #fff;
}

.hscroll {
    display: flex;
    align-items: center;
    width: 357px;
    margin-left: auto;
}

.split {
    width: 5px;
    height: 13px;
    background: #c8c8c8;
}

.hscroll .lt {
    margin-left: 7px;
}

.hscroll .thumb {
    width: 17px;
    height: 13px;
    margin-left: auto;
}

.hscroll .rt {
    margin: 0 23px 0 5px;
}

.right {
    flex: none;
    margin-left: 2px;
}

.right .side {
    height: 391px;
}

.right .side.order {
    height: 106px;
    padding-top: 3px;
}

/* command window */
.command {
    display: flex;
    flex: none;
    height: 57px;
    margin-top: 4px;
    padding: 5px 8px 0 4px;
    border-top: 2px solid #777;
    border-bottom: 1px solid #999;
}

.command .grip {
    height: 42px;
    margin: 3px 3px 0 1px;
    border-bottom: 1px solid #aaa;
}

.cmd-box {
    flex: 1;
    height: 48px;
    border-top: 2px solid #666;
    border-left: 2px solid #777;
}

.history {
    display: flex;
    height: 30px;
    border-bottom: 1px solid #999;
    background: #fff;
}

.lines {
    flex: 1;
    margin-top: -1px;
}

.cmd-line {
    width: 500px;
    padding-left: 1px;
    font-family: "Noto Sans CJK SC", sans-serif;
    font-size: 11.5px;
    line-height: 13px;
    letter-spacing: 0.55px;
    white-space: pre;
    transform: scaleX(1.32);
    transform-origin: left;
}

.latin {
    font-family: "Liberation Mono", monospace;
    font-size: 11.5px;
    line-height: 1;
    letter-spacing: -0.78px;
}

.cmd-vscroll {
    display: flex;
    flex-direction: column;
    justify-content: space-between;
    align-items: center;
    width: 17px;
    padding: 6px 0 5px;
    background: #f0f0f0;
}

.prompt {
    display: flex;
    justify-content: space-between;
    height: 16px;
    margin-right: 18px;
    background: #fff;
}

.prompt .cmd-line {
    line-height: 16px;
}

.cmd-hscroll {
    display: flex;
    align-items: center;
    width: 68px;
    padding: 0 7px 0 9px;
    background: #f0f0f0;
}

.cmd-hscroll .thumb {
    width: 17px;
    height: 13px;
    margin-left: 4px;
}

.cmd-hscroll .rt {
    margin-left: auto;
}

/* status bar */
.status {
    display: flex;
    flex: none;
    align-items: flex-start;
    height: 23px;
    padding: 3px 0 0 4px;
    border-top: 1px solid #fff;
    font-family: "Noto Sans CJK SC", sans-serif;
}

.coords {
    width: 251px;
    height: 18px;
    margin-right: 4px;
    padding-left: 1px;
    border: 1px solid #aaa;
    font-family: "Liberation Mono", monospace;
    font-size: 10px;
    line-height: 19px;
    white-space: pre;
}

.toggle {
    height: 18px;
    margin-right: 4px;
    padding: 0 1px;
    border: 1px solid;
    border-color: #fff #999 #999 #fff;
    line-height: 17px;
    white-space: nowrap;
}

.toggle.on {
    border-color: #111 #fff #fff #111;
}

.toggle.dyn {
    width: 22px;
    font-family: "Liberation Mono", monospace;
    font-size: 10px;
    line-height: 19px;
}

.tray {
    display: flex;
    justify-content: space-around;
    align-items: center;
    width: 43px;
    height: 18px;
    margin-left: auto;
    border: 1px solid;
    border-color: #999 #fff #fff #999;
}

.tray svg {
    width: 15px;
    height: 15px;
}

.tray-drop {
    width: 8px;
    height: 4px;
    margin: 11px 10px 0 6px;
    background: #000;
    clip-path: polygon(0 0, 100% 0, 50% 100%);
}

.resize {
    width: 10px;
    height: 10px;
    margin-top: 8px;
}
```
